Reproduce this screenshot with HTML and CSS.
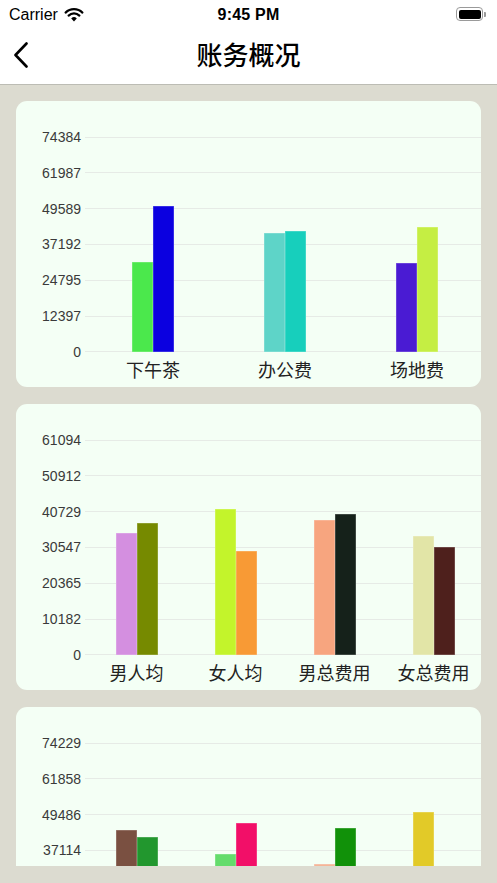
FILE: index.html
```html
<!DOCTYPE html>
<html lang="zh">
<head>
  <meta charset="UTF-8">
  <meta name="viewport" content="width=device-width, initial-scale=1.0">
  <title>账务概况</title>
  <link rel="stylesheet" href="styles.css">
</head>
<body>
  <div class="app">
    <header class="top">
      <div class="statusbar">
        <div class="carrier">
          <span>Carrier</span>
          <svg class="wifi" width="20" height="14" viewBox="0 0 20 14">
            <path d="M10 13.5 L7.2 10.4 A4 4 0 0 1 12.8 10.4 Z" fill="#000"/>
            <path d="M4.6 7.6 A7.7 7.7 0 0 1 15.4 7.6" stroke="#000" stroke-width="2.2" fill="none" stroke-linecap="round"/>
            <path d="M1.6 4.6 A12 12 0 0 1 18.4 4.6" stroke="#000" stroke-width="2.2" fill="none" stroke-linecap="round"/>
          </svg>
        </div>
        <div class="time">9:45 PM</div>
        <div class="battery">
          <span class="cell"><i></i></span><span class="nub"></span>
        </div>
      </div>
      <nav class="navbar">
        <button class="back" aria-label="返回">
          <svg width="16" height="26" viewBox="0 0 16 26">
            <path d="M13.5 1.5 L2.5 13 L13.5 24.5" stroke="#000" stroke-width="2.6" fill="none" stroke-linecap="round" stroke-linejoin="round"/>
          </svg>
        </button>
        <h1>账务概况</h1>
      </nav>
    </header>

    <main class="scroll">
      <!-- 第一组：费用类别 -->
      <section class="card">
        <div class="chart">
          <div class="grid">
            <div class="tick"><span>74384</span><i></i></div>
            <div class="tick"><span>61987</span><i></i></div>
            <div class="tick"><span>49589</span><i></i></div>
            <div class="tick"><span>37192</span><i></i></div>
            <div class="tick"><span>24795</span><i></i></div>
            <div class="tick"><span>12397</span><i></i></div>
            <div class="tick"><span>0</span><i></i></div>
          </div>
          <div class="bars">
            <div class="group">
              <div class="bar" style="height:90px;background:#4be84c"></div>
              <div class="bar" style="height:146px;background:#0b00e0"></div>
            </div>
            <div class="group">
              <div class="bar" style="height:119px;background:#5ed4c8"></div>
              <div class="bar" style="height:121px;background:#17cfbc"></div>
            </div>
            <div class="group">
              <div class="bar" style="height:89px;background:#4a1bd3"></div>
              <div class="bar" style="height:125px;background:#c5ee43"></div>
            </div>
          </div>
        </div>
        <div class="xlabels">
          <span>下午茶</span><span>办公费</span><span>场地费</span>
        </div>
      </section>

      <!-- 第二组：男女对比 -->
      <section class="card">
        <div class="chart">
          <div class="grid">
            <div class="tick"><span>61094</span><i></i></div>
            <div class="tick"><span>50912</span><i></i></div>
            <div class="tick"><span>40729</span><i></i></div>
            <div class="tick"><span>30547</span><i></i></div>
            <div class="tick"><span>20365</span><i></i></div>
            <div class="tick"><span>10182</span><i></i></div>
            <div class="tick"><span>0</span><i></i></div>
          </div>
          <div class="bars">
            <div class="group">
              <div class="bar" style="height:122px;background:#d48fe0"></div>
              <div class="bar" style="height:132px;background:#768a00"></div>
            </div>
            <div class="group">
              <div class="bar" style="height:146px;background:#c3f42b"></div>
              <div class="bar" style="height:104px;background:#f89a35"></div>
            </div>
            <div class="group">
              <div class="bar" style="height:135px;background:#f7a57f"></div>
              <div class="bar" style="height:141px;background:#15211a"></div>
            </div>
            <div class="group">
              <div class="bar" style="height:119px;background:#e2e5a7"></div>
              <div class="bar" style="height:108px;background:#4e201c"></div>
            </div>
          </div>
        </div>
        <div class="xlabels">
          <span>男人均</span><span>女人均</span><span>男总费用</span><span>女总费用</span>
        </div>
      </section>

      <!-- 第三组 -->
      <section class="card">
        <div class="chart">
          <div class="grid">
            <div class="tick"><span>74229</span><i></i></div>
            <div class="tick"><span>61858</span><i></i></div>
            <div class="tick"><span>49486</span><i></i></div>
            <div class="tick"><span>37114</span><i></i></div>
            <div class="tick"><span>24743</span><i></i></div>
            <div class="tick"><span>12371</span><i></i></div>
            <div class="tick"><span>0</span><i></i></div>
          </div>
          <div class="bars">
            <div class="group">
              <div class="bar" style="height:128px;background:#7a5041"></div>
              <div class="bar" style="height:121px;background:#22972e"></div>
            </div>
            <div class="group">
              <div class="bar" style="height:104px;background:#64dc6c"></div>
              <div class="bar" style="height:135px;background:#f20f68"></div>
            </div>
            <div class="group">
              <div class="bar" style="height:94px;background:#f5b597"></div>
              <div class="bar" style="height:130px;background:#119109"></div>
            </div>
            <div class="group">
              <div class="bar" style="height:146px;background:#e2ca28"></div>
              <div class="bar" style="height:0px;background:#5b6ee1"></div>
            </div>
          </div>
        </div>
        <div class="xlabels">
          <span>一季度</span><span>二季度</span><span>三季度</span><span>四季度</span>
        </div>
      </section>
    </main>
  </div>
</body>
</html>
```

FILE: styles.css
```css
* {
  margin: 0;
  padding: 0;
  box-sizing: border-box;
}

html, body {
  width: 100%;
  height: 100%;
  background: #dcdbd0;
  overflow: hidden;
  font-family: "Liberation Sans", "Noto Sans CJK SC", sans-serif;
}

.app {
  display: flex;
  flex-direction: column;
  height: 866px;
}

.top {
  background: #fff;
  border-bottom: 1px solid #bcbcb4;
}

.statusbar {
  height: 36px;
  display: flex;
  align-items: flex-start;
  justify-content: space-between;
  padding: 4px 11px 0 9px;
  position: relative;
}

.carrier {
  display: flex;
  align-items: center;
  gap: 6px;
  font-size: 16px;
  color: #000;
  height: 22px;
}

.wifi {
  margin-top: -1px;
}

.time {
  position: absolute;
  left: 0;
  right: 0;
  top: 4px;
  height: 22px;
  line-height: 22px;
  text-align: center;
  font-size: 16px;
  font-weight: 700;
  letter-spacing: 0.2px;
}

.battery {
  display: flex;
  align-items: center;
  height: 22px;
  margin-top: -1px;
}

.battery .cell {
  width: 27px;
  height: 14px;
  border: 1.5px solid #9a9a9a;
  border-radius: 4px;
  padding: 1.5px;
}

.battery .cell i {
  display: block;
  width: 100%;
  height: 100%;
  background: #000;
  border-radius: 2px;
}

.battery .nub {
  width: 2px;
  height: 5px;
  background: #9a9a9a;
  border-radius: 0 1px 1px 0;
  margin-left: 1px;
}

.navbar {
  height: 48px;
  display: flex;
  align-items: flex-start;
  justify-content: center;
  padding-top: 3px;
  position: relative;
}

.navbar h1 {
  font-family: "Noto Sans CJK SC", sans-serif;
  font-size: 26px;
  line-height: 30px;
  font-weight: 500;
  color: #000;
}

.back {
  position: absolute;
  left: 11px;
  top: 4px;
  border: none;
  background: none;
  width: 20px;
  height: 30px;
  display: flex;
  align-items: center;
  justify-content: center;
}

.scroll {
  flex: 1;
  overflow: hidden;
  padding: 16px 16px 0;
  display: flex;
  flex-direction: column;
  gap: 17px;
}

.card {
  flex-shrink: 0;
  width: 465px;
  height: 286px;
  background: #f4fff5;
  border-radius: 11px;
  overflow: hidden;
  padding-top: 36px;
}

.chart {
  position: relative;
  height: 215px;
}

.grid {
  height: 100%;
  display: flex;
  flex-direction: column;
  justify-content: space-between;
}

.tick {
  height: 0;
  display: flex;
  align-items: center;
}

.tick span {
  width: 65px;
  text-align: right;
  font-size: 14px;
  color: #3a3a3a;
  line-height: 16px;
}

.tick i {
  flex: 1;
  height: 1px;
  margin-left: 4px;
  background: #e6ebe6;
}

.bars {
  position: absolute;
  left: 71px;
  bottom: 0;
  width: 396px;
  height: 100%;
  display: flex;
}

.group {
  flex: 1;
  display: flex;
  align-items: flex-end;
  justify-content: center;
}

.bar {
  width: 21px;
  box-shadow: inset 0 0 0 0.5px rgba(255, 255, 255, 0.35);
}

.xlabels {
  display: flex;
  width: 396px;
  margin-left: 71px;
  margin-top: 5px;
}

.xlabels span {
  flex: 1;
  text-align: center;
  font-family: "Noto Sans CJK SC", sans-serif;
  font-size: 18px;
  line-height: 24px;
  color: #222;
}
```
